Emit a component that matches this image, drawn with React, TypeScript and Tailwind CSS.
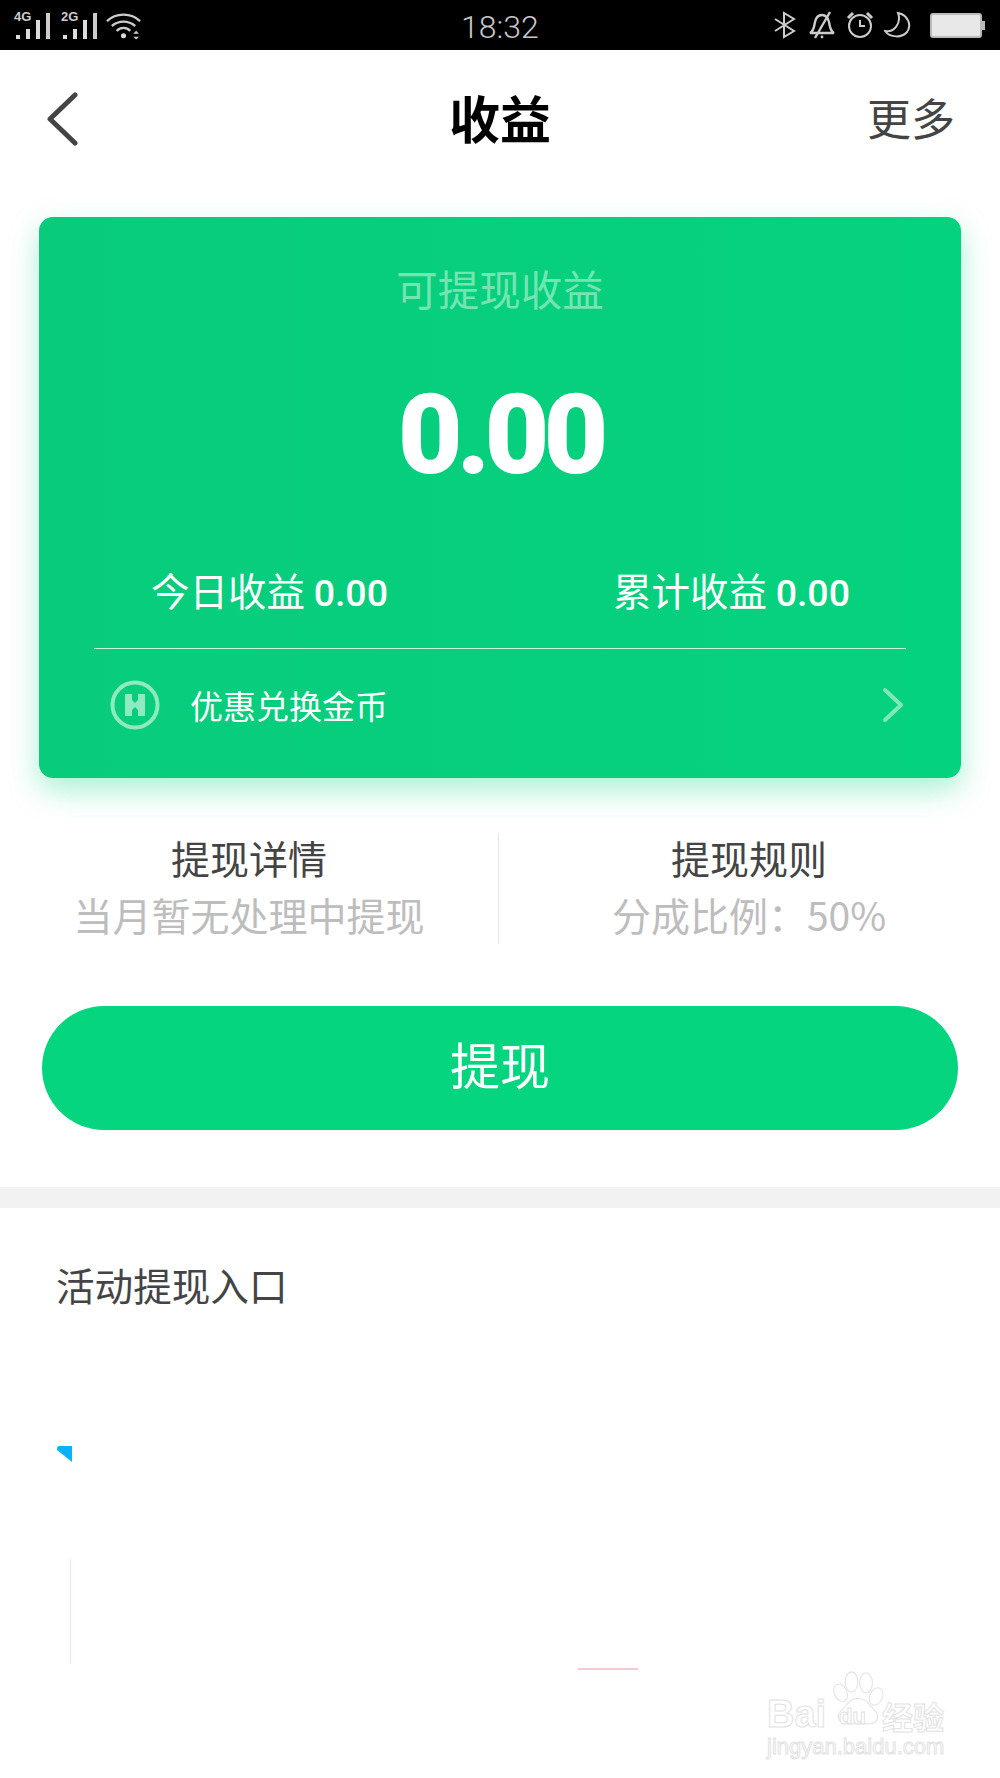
import React from "react";

function Signal({ label }: { label: string }) {
  return (
    <div className="relative h-[26px] w-[36px]">
      <span className="absolute left-0 top-[-3px] font-['Liberation_Sans',sans-serif] text-[13px] font-bold leading-[14px] text-[#ccc]">
        {label}
      </span>
      <svg width="36" height="26" viewBox="0 0 36 26" className="absolute left-0 top-0">
        <rect x="2" y="22" width="4" height="4" fill="#ddd" />
        <rect x="12" y="16" width="4" height="10" fill="#ddd" />
        <rect x="22" y="7" width="4" height="19" fill="#ddd" />
        <rect x="32" y="0" width="4" height="26" fill="#ccc" />
      </svg>
    </div>
  );
}

function StatusIcons() {
  return (
    <div className="flex items-center">
      <svg width="24" height="28" viewBox="0 0 24 28" fill="none" stroke="#ccc" strokeWidth="2" className="mr-[11px]">
        <path d="M2 8 L21 20 L11 26 L11 2 L21 8 L2 20" />
      </svg>
      <svg width="28" height="28" viewBox="0 0 28 28" fill="none" stroke="#ccc" strokeWidth="2.4" className="mr-[10px]">
        <path d="M2 22 C6 20 6 16 7 11 C8 6 11 4 14 4 C18 4 20 7 21 11 C22 16 22 20 26 22 Z" />
        <path d="M7 27 L22 1" />
        <circle cx="14" cy="26" r="1.4" fill="#ccc" stroke="none" />
      </svg>
      <svg width="28" height="28" viewBox="0 0 28 28" fill="none" stroke="#ccc" strokeWidth="2" className="mr-[10px]">
        <circle cx="14" cy="15" r="11" />
        <path d="M14 9 V15 H19" />
        <path d="M2 7 L7 2 M21 2 L26 7" strokeWidth="3" />
      </svg>
      <svg width="27" height="28" viewBox="0 0 27 28" fill="none" stroke="#ccc" strokeWidth="2" className="mr-[19px]">
        <path d="M14 2 C24 4 28 14 23 21 C18 27 6 27 1 20 C9 22 18 13 14 2 Z" />
      </svg>
      <div className="flex items-center">
        <div className="h-[25px] w-[52px] rounded-[3px] border-2 border-[#bbb] bg-[#e8e8e8]" />
        <div className="h-[9px] w-[3px] bg-[#bbb]" />
      </div>
    </div>
  );
}

function Watermark() {
  const outline = "text-white [-webkit-text-stroke:1px_#e2e2e2] font-['Liberation_Sans',sans-serif]";
  return (
    <div className="absolute left-[767px] top-[1671px] h-[90px] w-[180px]">
      <svg width="56" height="60" viewBox="0 0 60 66" fill="white" stroke="#e4e4e4" strokeWidth="1.2" className="absolute left-[62px] top-[0px]">
        <ellipse cx="12" cy="24" rx="7" ry="10" transform="rotate(-25 12 24)" />
        <ellipse cx="24" cy="12" rx="7" ry="11" />
        <ellipse cx="40" cy="13" rx="7" ry="11" />
        <ellipse cx="51" cy="28" rx="7" ry="10" transform="rotate(25 51 28)" />
        <path d="M31 30 C40 30 44 38 49 43 C56 50 52 58 44 58 L20 58 C10 58 6 50 13 43 C19 38 22 30 31 30 Z" />
      </svg>
      <span className={`absolute left-0 top-[21px] text-[38px] font-bold leading-[44px] ${outline}`}>Bai</span>
      <span className={`absolute left-[72px] top-[34px] text-[22px] font-bold leading-[24px] ${outline}`}>du</span>
      <span className="absolute left-[115px] top-[25px] font-['Noto_Sans_CJK_SC',sans-serif] text-[31px] font-bold leading-[40px] text-white [-webkit-text-stroke:1px_#e2e2e2]">
        经验
      </span>
      <span className={`absolute left-0 top-[63px] text-[22px] leading-[26px] ${outline}`}>jingyan.baidu.com</span>
    </div>
  );
}

export default function App() {
  return (
    <div className="relative h-[1778px] w-[1000px] overflow-hidden bg-white font-['Noto_Sans_CJK_SC',sans-serif]">
      {/* status bar */}
      <div className="relative flex h-[50px] items-center justify-between bg-black pl-[14px] pr-[15px]">
        <div className="flex items-center gap-[11px] pt-[2px]">
          <Signal label="4G" />
          <Signal label="2G" />
          <svg width="35" height="28" viewBox="0 0 36 28" fill="none" stroke="#ccc" strokeWidth="2.4" className="-ml-[2px]">
            <path d="M1 9 C10 0 26 0 35 9" />
            <path d="M6 14 C13 8 23 8 30 14" />
            <path d="M11 19 C15 15 21 15 25 19" />
            <circle cx="18" cy="24" r="2.6" fill="#ddd" stroke="none" />
            <path d="M28 22 L31 19 L34 22 Z M28 25 L31 28 L34 25 Z" fill="#ccc" stroke="none" />
          </svg>
        </div>
        <span className="absolute left-[461px] top-[8px] font-['Roboto',sans-serif] text-[32px] font-light leading-[38px] text-[#c8c8c8]">
          18:32
        </span>
        <StatusIcons />
      </div>

      {/* nav */}
      <div className="relative flex h-[140px] items-center justify-between pb-[1px] pl-[46px] pr-[45px]">
        <svg width="32" height="60" viewBox="0 0 32 60" fill="none" stroke="#444" strokeWidth="5" strokeLinecap="round" strokeLinejoin="round" className="-mt-[2px]">
          <path d="M29 6 L4 30 L29 54" />
        </svg>
        <span className="absolute left-0 right-0 -mt-[6px] text-center text-[51px] font-bold leading-[60px] text-black">收益</span>
        <span className="-mt-[6px] text-[44px] leading-[56px] text-[#444]">更多</span>
      </div>

      {/* card */}
      <div className="mx-[39px] mt-[27px] h-[561px] rounded-[14px] bg-gradient-to-r from-[#08cc7c] to-[#05d27e] px-[55px] shadow-[0_12px_30px_rgba(6,214,127,0.35)]">
        <div className="pt-[43px] text-center text-[41.5px] leading-[56px] text-[#74e4b3]">可提现收益</div>
        <div className="mt-[56px] text-center font-['Roboto',sans-serif] text-[112px] font-black leading-[126px] tracking-[-6px] text-white">
          0.00
        </div>
        <div className="mt-[64px] flex h-[58px] items-center justify-between pl-[57px] pr-[56px] text-[38.5px] leading-[58px] text-white">
          <span>
            今日收益 <span className="font-['Roboto',sans-serif] text-[37.5px] font-medium">0.00</span>
          </span>
          <span>
            累计收益 <span className="font-['Roboto',sans-serif] text-[37.5px] font-medium">0.00</span>
          </span>
        </div>
        <div className="mt-[28px] h-px bg-[#c9f5e0]" />
        <div className="flex h-[112px] items-center justify-between pl-[16px] pr-[2px]">
          <div className="flex items-center gap-[30px]">
            <svg width="50" height="50" viewBox="0 0 50 50" fill="none" className="blur-[0.7px]">
              <circle cx="25" cy="25" r="22.5" stroke="#8fe9c1" strokeWidth="4" />
              <path d="M15 14 H22 V20 L25 23 L28 20 V14 H35 V36 H28 V30 L25 27 L22 30 V36 H15 Z" fill="#8fe9c1" />
            </svg>
            <span className="text-[33px] leading-[44px] text-white">优惠兑换金币</span>
          </div>
          <svg width="22" height="36" viewBox="0 0 22 36" fill="none" stroke="#82e8bb" strokeWidth="4" strokeLinecap="round" strokeLinejoin="round">
            <path d="M3 3 L19 18 L3 33" />
          </svg>
        </div>
      </div>

      {/* details */}
      <div className="mt-[55px] flex h-[111px]">
        <div className="flex w-[498px] flex-col items-center">
          <span className="text-[39px] leading-[48px] text-[#444]">提现详情</span>
          <span className="text-[39px] leading-[66px] text-[#bdbdbd]">当月暂无处理中提现</span>
        </div>
        <div className="h-full w-px bg-[#e6e6e6]" />
        <div className="flex flex-1 flex-col items-center pr-[1px]">
          <span className="text-[39px] leading-[48px] text-[#444]">提现规则</span>
          <span className="text-[39px] leading-[66px] text-[#bdbdbd]">分成比例：50%</span>
        </div>
      </div>

      {/* button */}
      <div className="mx-[42px] mt-[62px] flex h-[124px] items-center justify-center rounded-full bg-[#06d57f] pb-[10px] text-[50px] text-white">
        提现
      </div>

      <div className="mt-[57px] h-[21px] bg-[#f2f2f2]" />

      <div className="pl-[56px] pt-[48px] text-[38.6px] leading-[56px] text-[#444]">活动提现入口</div>

      {/* stray fragments */}
      <svg width="15" height="16" viewBox="0 0 15 16" className="absolute left-[57px] top-[1446px]">
        <path d="M2 0 H15 V16 L0 4 Q0 0 2 0 Z" fill="#0bb1f9" />
      </svg>
      <div className="absolute left-[70px] top-[1559px] h-[105px] w-px bg-[#fbdde3]" />
      <div className="absolute left-[578px] top-[1668px] h-[2px] w-[60px] bg-[#f6c9cf]" />

      <Watermark />
    </div>
  );
}
